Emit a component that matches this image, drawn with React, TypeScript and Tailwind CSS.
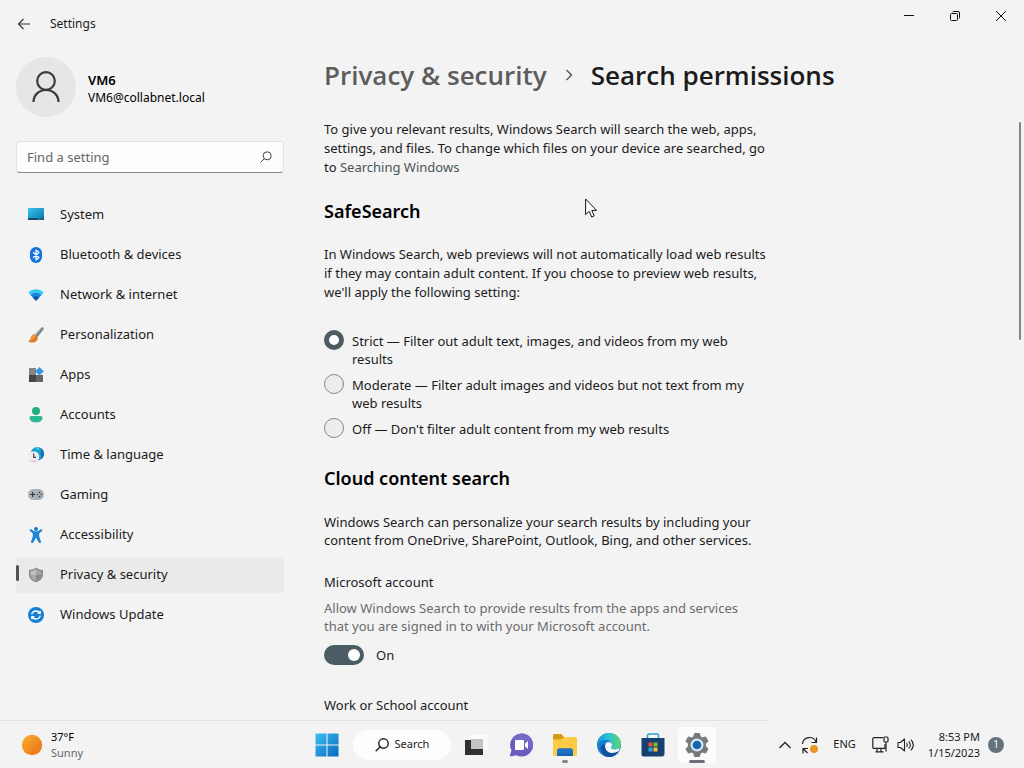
import React, { useState } from 'react';

interface NavItem {
  label: string;
  icon: React.ReactNode;
}

const navItems: NavItem[] = [
  {
    label: 'System',
    icon: (
      <svg viewBox="0 0 16 16" className="size-4">
        <defs>
          <linearGradient id="sys" x1="0" y1="0" x2="1" y2="1">
            <stop offset="0" stopColor="#38c8e8" />
            <stop offset="1" stopColor="#0872ae" />
          </linearGradient>
        </defs>
        <rect y="1" width="16" height="12" rx="1" fill="url(#sys)" />
        <path d="M0 11h16v1a1 1 0 0 1-1 1H1a1 1 0 0 1-1-1z" fill="#0c4a70" />
        <path d="M9.500 12h5" stroke="#8fd0e8" strokeWidth=".8" strokeDasharray="1 .8" />
      </svg>
    ),
  },
  {
    label: 'Bluetooth & devices',
    icon: (
      <svg viewBox="0 0 16 16" className="size-4">
        <rect x="2" width="12" height="16" rx="6" fill="#0f72e0" />
        <path d="M5 5.300 11 10.500 8 13V3l3 2.500L5 10.700" fill="none" stroke="#fff" strokeWidth="1.200" strokeLinejoin="round" />
      </svg>
    ),
  },
  {
    label: 'Network & internet',
    icon: (
      <svg viewBox="0 0 16 16" className="size-4">
        <path d="M.3 5.500C4.500 1.300 11.500 1.300 15.700 5.500L8.600 13.200a.8.8 0 0 1-1.200 0z" fill="#3ccbf0" />
        <path d="M2.600 8C5.600 5 10.400 5 13.400 8L8.600 13.200a.8.8 0 0 1-1.200 0z" fill="#1b86dc" />
        <path d="M4.800 10.400C6.600 8.700 9.400 8.700 11.200 10.400L8.600 13.200a.8.8 0 0 1-1.200 0z" fill="#1452b0" />
      </svg>
    ),
  },
  {
    label: 'Personalization',
    icon: (
      <svg viewBox="0 0 16 16" className="size-4">
        <path d="M14.500.3c1 .2 1.500 1 1 2L9.700 10 6.800 7.600 13.300.8z" fill="#76838a" />
        <path d="M13.300.8 6.800 7.600l1.200 1L14.500.3z" fill="#a5b0b6" />
        <path d="M6.800 7.600 9.700 10c.5 3-2 5.600-5.200 5.600-1.800 0-3.400-.5-4.300-1.500 2.500-.8 2-3 3.200-4.900.8-1.200 2-1.800 3.400-1.600z" fill="#e07a24" />
        <path d="M6.800 7.600c-1.400-.2-2.600.4-3.400 1.600-1.200 1.900-.7 4.100-3.200 4.900C4 14 6 11 8 8.600z" fill="#ee9a45" />
      </svg>
    ),
  },
  {
    label: 'Apps',
    icon: (
      <svg viewBox="0 0 16 16" className="size-4">
        <path d="M1 1h7v7H1z" fill="#858585" />
        <path d="M1 8h7v7H1z" fill="#454545" />
        <path d="M8 8h7v7H8z" fill="#666" />
        <path d="m11.500 0 4.300 4.300-4.300 4.300-4.300-4.300z" fill="#2f9be5" />
      </svg>
    ),
  },
  {
    label: 'Accounts',
    icon: (
      <svg viewBox="0 0 16 16" className="size-4">
        <circle cx="8" cy="4" r="4" fill="#1fae7c" />
        <path d="M3.200 9h9.600c1 0 1.700.8 1.700 1.800 0 3-2.700 4.700-6.500 4.700s-6.500-1.700-6.500-4.700C1.500 9.800 2.200 9 3.200 9z" fill="#2cb890" />
      </svg>
    ),
  },
  {
    label: 'Time & language',
    icon: (
      <svg viewBox="0 0 16 16" className="size-4">
        <circle cx="9.300" cy="6.700" r="6.700" fill="#1d9fd0" />
        <path d="M7 .5c2-.6 3.500-.4 4.500.4-1 .8-1.500 2.200-.5 3.400z" fill="#45cbd8" />
        <path d="M13 1.200c2 1.200 3 3.300 3 5.500 0 2-1 4-2.600 5.300-.4-3-1.400-6-.4-10.800z" fill="#1470b8" />
        <circle cx="5.700" cy="9.800" r="5.600" fill="#f1edf2" />
        <path d="M1 12.700c2 1.200 7 1.200 9.400 0-2 3.600-7.400 3.700-9.400 0z" fill="#edc6d6" />
        <path d="M5.700 6.500v3.900H8" fill="none" stroke="#3b4450" strokeWidth="1.200" />
      </svg>
    ),
  },
  {
    label: 'Gaming',
    icon: (
      <svg viewBox="0 0 16 16" className="size-4">
        <rect y="2" width="16" height="11" rx="5.500" fill="#a8b2b8" />
        <path d="M2.300 7.500h4.800M4.700 5.100v4.800" stroke="#30383d" strokeWidth="1.200" />
        <g fill="#3c464c">
          <circle cx="9.400" cy="7.500" r=".8" />
          <circle cx="11.500" cy="5.300" r=".9" />
          <circle cx="13.300" cy="7.500" r=".8" />
          <circle cx="11.500" cy="9.700" r=".9" />
        </g>
      </svg>
    ),
  },
  {
    label: 'Accessibility',
    icon: (
      <svg viewBox="0 0 16 16" className="size-4">
        <circle cx="8" cy="2" r="2" fill="#1778cc" />
        <path
          d="M2 2.600c.5-.6 1.200-.6 1.700-.1C5 3.800 6 4.500 8 4.500s3-.7 4.300-2c.5-.5 1.200-.5 1.700.1.400.5.300 1.100-.2 1.600L11.200 6.600v2.900l1.700 5c.2.700-.1 1.300-.7 1.500-.7.200-1.200-.1-1.500-.7L8 10.800l-2.700 4.500c-.3.600-.8.900-1.500.7-.6-.2-.9-.8-.7-1.500l1.700-5V6.600L2.200 4.200c-.5-.5-.6-1.100-.2-1.600z"
          fill="#1f84d6"
        />
      </svg>
    ),
  },
  {
    label: 'Privacy & security',
    icon: (
      <svg viewBox="0 0 16 16" className="size-4">
        <path d="M8 .5c1.900 1.500 4.200 2.300 7 2.400v4.700c0 3.600-2.700 6.500-7 7.700C3.700 14.100 1 11.200 1 7.600V2.900C3.800 2.800 6.100 2 8 .5z" fill="#8a8b8d" />
        <path d="M8 2v6H2.500V4.200C4.700 4 6.500 3.200 8 2z" fill="#bebfc1" />
        <path d="M8 2v6h5.500V4.200C11.300 4 9.500 3.200 8 2z" fill="#a2a3a5" />
        <path d="M2.500 8H8v6c-3.200-1.100-5.300-3.300-5.500-6z" fill="#a9aaac" />
      </svg>
    ),
  },
  {
    label: 'Windows Update',
    icon: (
      <svg viewBox="0 0 16 16" className="size-4">
        <circle cx="8" cy="8" r="8" fill="#1580d2" />
        <path
          d="M3.700 7.300C4.200 5.200 6 4 8 4c1.700 0 3 .8 3.900 2M12.200 3.700v2.600H9.600M12.300 8.700C11.800 10.800 10 12 8 12c-1.700 0-3-.8-3.900-2M3.800 12.300V9.700h2.600"
          fill="none"
          stroke="#fff"
          strokeWidth="1.300"
        />
      </svg>
    ),
  },
];

const safeSearchOptions = [
  { value: 'strict', label: 'Strict — Filter out adult text, images, and videos from my web results' },
  { value: 'moderate', label: 'Moderate — Filter adult images and videos but not text from my web results' },
  { value: 'off', label: "Off — Don't filter adult content from my web results" },
];

const TitleBar = () => (
  <header className="flex h-12 shrink-0 items-start justify-between">
    <div className="flex h-12 items-center gap-4 pl-4">
      <button type="button" aria-label="Back" className="flex size-4 items-center justify-center">
        <svg viewBox="0 0 16 16" className="size-4" fill="none" stroke="#333" strokeWidth="1.100">
          <path d="M14 8H2.500M7.500 3 2.500 8l5 5" />
        </svg>
      </button>
      <span className="pl-0.5 text-xs">Settings</span>
    </div>
    <div className="flex h-8">
      <button type="button" aria-label="Minimize" className="flex w-[46px] items-center justify-center">
        <svg viewBox="0 0 10 10" className="size-2.5" stroke="#111">
          <path d="M0 4.500h10" />
        </svg>
      </button>
      <button type="button" aria-label="Restore" className="flex w-[46px] items-center justify-center">
        <svg viewBox="0 0 10 10" className="size-2.5" fill="none" stroke="#111">
          <rect x=".5" y="2.500" width="7" height="7" rx="1" />
          <path d="M2.500 1A1.500 1.500 0 0 1 3.500.5H8A1.500 1.500 0 0 1 9.500 2v4.500c0 .5-.2.800-.5 1" />
        </svg>
      </button>
      <button type="button" aria-label="Close" className="flex w-[46px] items-center justify-center">
        <svg viewBox="0 0 10 10" className="size-2.5" stroke="#111">
          <path d="m0 0 10 10M10 0 0 10" />
        </svg>
      </button>
    </div>
  </header>
);

const Sidebar = () => (
  <aside className="w-[300px] shrink-0 px-4 pt-[9px]">
    <div className="flex items-center gap-3">
      <div className="flex size-[60px] items-center justify-center rounded-full bg-[#e6e6e6]">
        <svg viewBox="0 0 30 32" className="h-8 w-[30px]" fill="none" stroke="#3a3a3a" strokeWidth="2.200">
          <circle cx="15" cy="10" r="8.800" />
          <path d="M2.500 31c0-7 5.500-12 12.500-12s12.500 5 12.500 12" />
        </svg>
      </div>
      <div className="pt-1">
        <p className="text-[13px] leading-[18px] font-semibold text-black">VM6</p>
        <p className="text-xs leading-[18px] text-black">VM6@collabnet.local</p>
      </div>
    </div>

    <form className="relative mt-6" onSubmit={(e) => e.preventDefault()}>
      <input
        type="text"
        aria-label="Find a setting"
        placeholder="Find a setting"
        className="block h-8 w-[268px] rounded border border-[#e2e2e2] border-b-[#868686] bg-[#fdfdfd] pr-9 pl-2.5 text-[13px] outline-none placeholder:text-[#666]"
      />
      <svg viewBox="0 0 12 12" className="absolute top-2.5 right-3 size-3" fill="none" stroke="#444">
        <circle cx="7.200" cy="4.800" r="4" />
        <path d="M4.400 7.600.6 11.400" />
      </svg>
    </form>

    <nav className="mt-6 flex flex-col gap-1">
      {navItems.map((item) => {
        const active = item.label === 'Privacy & security';
        return (
          <a
            key={item.label}
            href="#"
            aria-current={active ? 'page' : undefined}
            className={`relative flex h-9 items-center gap-4 rounded pl-3 text-[13px] ${active ? 'bg-[#eaeaea]' : ''}`}
          >
            {active && <span className="absolute top-2 left-0 h-4 w-[3px] rounded-full bg-[#4a5459]" />}
            {item.icon}
            {item.label}
          </a>
        );
      })}
    </nav>
  </aside>
);

const SearchPermissions = () => {
  const [safeSearch, setSafeSearch] = useState('strict');
  const [account, setAccount] = useState(true);

  return (
    <main className="flex min-w-0 flex-1 flex-col pl-6">
      <h1 className="flex items-center pt-[9px] font-['Open_Sans',sans-serif] text-[26px] leading-9 font-semibold whitespace-nowrap">
        <a href="#" className="text-[#5d5d5d]">Privacy &amp; security</a>
        <svg viewBox="0 0 10 12" className="mx-[17px] h-3 w-2.5" fill="none" stroke="#5d5d5d" strokeWidth="1.500">
          <path d="m2.500 1 5 5-5 5" />
        </svg>
        <span>Search permissions</span>
      </h1>

      <div className="mt-[27px] flex min-h-0 flex-1 justify-between overflow-hidden">
        <div className="w-[448px] text-[13px] leading-[18px]">
          <p className="leading-[19px]">
            To give you relevant results, Windows Search will search the web, apps, settings, and files. To change which
            files on your device are searched, go to{' '}
            <a href="#" className="text-[#4a5459]">Searching Windows</a>
          </p>

          <h2 id="safesearch-title" className="mt-5 text-lg leading-7 font-semibold text-black">SafeSearch</h2>
          <p className="mt-5 leading-[19px]">
            In Windows Search, web previews will not automatically load web results if they may contain adult content. If
            you choose to preview web results, we'll apply the following setting:
          </p>
          <div role="radiogroup" aria-labelledby="safesearch-title" className="mt-7 flex flex-col gap-1.5">
            {safeSearchOptions.map((option) => (
              <label key={option.value} className="flex items-start gap-2">
                <input
                  type="radio"
                  name="safesearch"
                  value={option.value}
                  checked={safeSearch === option.value}
                  onChange={() => setSafeSearch(option.value)}
                  className="size-5 shrink-0 appearance-none rounded-full border border-[#868686] bg-[#ededed] checked:border-5 checked:border-[#4f5b61] checked:bg-white"
                />
                <span className="pt-0.5">{option.label}</span>
              </label>
            ))}
          </div>

          <h2 className="mt-[26px] text-lg leading-7 font-semibold text-black">Cloud content search</h2>
          <p className="mt-[21px]">
            Windows Search can personalize your search results by including your content from OneDrive, SharePoint,
            Outlook, Bing, and other services.
          </p>

          <h3 className="mt-6">Microsoft account</h3>
          <p className="mt-2 pr-4 text-[#6b6b6b]">
            Allow Windows Search to provide results from the apps and services that you are signed in to with your
            Microsoft account.
          </p>
          <label className="mt-2.5 flex items-center gap-3">
            <input
              type="checkbox"
              role="switch"
              aria-label="Microsoft account"
              checked={account}
              onChange={(e) => setAccount(e.target.checked)}
              className="flex h-5 w-10 appearance-none items-center rounded-full bg-[#8a8a8a] px-1 before:size-3 before:rounded-full before:bg-white checked:justify-end checked:bg-[#4c5c65]"
            />
            <span>{account ? 'On' : 'Off'}</span>
          </label>

          <h3 className="mt-[31px]">Work or School account</h3>
        </div>
        <div className="mt-0.5 mr-[3px] h-[218px] w-0.5 rounded-full bg-[#858585]" />
      </div>
    </main>
  );
};

const taskbarApps = [
  {
    name: 'Task View',
    icon: (
      <svg viewBox="0 0 24 24" className="size-6">
        <path d="M6 2h17v15H6z" fill="#fafafa" />
        <path d="M0 7h18v15H0z" fill="#303030" />
        <path d="M6 6h12v10H6z" fill="#c4c4c4" />
      </svg>
    ),
  },
  {
    name: 'Chat',
    icon: (
      <svg viewBox="0 0 24 24" className="size-6">
        <path d="M12.500.5a11.500 11.500 0 1 1-5 21.800L1 23.500.9 22.300 2.500 17.500A11.500 11.500 0 0 1 12.500.5z" fill="#6a5dbe" />
        <path d="M12.500.5A11.500 11.500 0 0 1 24 12c0 2-.5 3.500-1.200 5C18 8 10 7 3 7.200A11.500 11.500 0 0 1 12.500.5z" fill="#7469c8" />
        <rect x="6" y="7" width="9" height="10" rx="1" fill="#fff" />
        <path d="m16 10.500 3-2.500v8l-3-2.500z" fill="#fff" />
      </svg>
    ),
  },
  {
    name: 'File Explorer',
    running: true,
    icon: (
      <svg viewBox="0 0 24 24" className="size-6">
        <path d="M0 2.500C0 1.700.5 1 1.300 1h7L11 4v4H0z" fill="#d79a14" />
        <path d="M0 6.500h8.500L11 4h11.500c.8 0 1.500.7 1.500 1.500v16c0 .8-.7 1.500-1.500 1.500h-21C.7 23 0 22.300 0 21.500z" fill="#fbcb45" />
        <path d="M4 22v-4c0-1.700 1-2.700 2.500-2.700h11c1.500 0 2.500 1 2.500 2.700v4z" fill="#1c70c6" />
        <path d="M4 23v-2.500h16V23z" fill="#1a62b0" />
      </svg>
    ),
  },
  {
    name: 'Edge',
    icon: (
      <svg viewBox="0 0 24 24" className="size-6">
        <defs>
          <linearGradient id="edgeTop" x1="0" y1=".5" x2="1" y2=".5">
            <stop offset="0" stopColor="#1597dc" />
            <stop offset=".5" stopColor="#2bc4cf" />
            <stop offset="1" stopColor="#60d56c" />
          </linearGradient>
        </defs>
        <circle cx="12" cy="12" r="12" fill="#147fd0" />
        <path d="M0 11.500C.8 4.500 5.800 0 12 0c7 0 12 5 12 10.500 0 3.800-2.700 6-6 6-2.500 0-4-1-4-2 0-.8 1-1.200 1-3C15 9 12 7 8.500 7 4.500 7 1.500 9 0 11.500z" fill="url(#edgeTop)" />
        <path d="M8 13c0-2.500 1.700-4 3.500-4 2 0 3.500 1.200 3.500 2.700 0 1.500-1 2-1 2.800 0 1 1.500 2 4 2 1.500 0 3-.5 4-1.200.5-.4 1 .1.700.7-1 2-2.500 4-4.700 5.500C12.500 22.500 8 18 8 13z" fill="#f4f8fb" />
        <path d="M8.300 11C7 15.500 10 20 15 20c2.500 0 4.500-.8 6-1.500.4-.2.700.2.500.5A12 12 0 0 1 12 24c-5-.5-8.500-4.500-8.500-8.500 0-2.500 2-4 4.800-4.500z" fill="#124f9e" />
      </svg>
    ),
  },
  {
    name: 'Microsoft Store',
    icon: (
      <svg viewBox="0 0 24 24" className="size-6">
        <path d="M6.500 6V2.500C6.500 1.700 7.100 1 8 1h8c.9 0 1.500.7 1.500 1.500V6" fill="none" stroke="#2ba0d8" strokeWidth="1.500" />
        <path d="M.5 5h23v16c0 1.300-1 2.500-2.500 2.500H3A2.400 2.400 0 0 1 .5 21z" fill="#16406f" />
        <path d="M7.500 9.500h4v4h-4z" fill="#e8532b" />
        <path d="M12.500 9.500h4v4h-4z" fill="#7fba2d" />
        <path d="M7.500 14.500h4v4h-4z" fill="#2ba4e4" />
        <path d="M12.500 14.500h4v4h-4z" fill="#fcb92a" />
      </svg>
    ),
  },
  {
    name: 'Settings',
    active: true,
    icon: (
      <svg viewBox="0 0 24 24" className="size-6">
        <path
          d="m9.500.5 5 0 .7 3.200 2.200 1.200 3.200-1 2.500 4.300-2.500 2.400v2.800l2.500 2.400-2.500 4.300-3.200-1-2.200 1.200-.7 3.200h-5l-.7-3.200-2.200-1.200-3.200 1-2.500-4.300 2.500-2.400v-2.800L.9 8.200l2.500-4.300 3.200 1 2.200-1.200z"
          fill="#74797d"
          stroke="#74797d"
          strokeLinejoin="round"
        />
        <circle cx="12" cy="12" r="6.500" fill="#d7e9f5" />
        <circle cx="12" cy="12" r="4.300" fill="#1667b2" />
      </svg>
    ),
  },
];

const Taskbar = () => (
  <footer className="shrink-0">
    <div className="h-px w-3/4 bg-[#e2e2e2]" />
    <div className="grid h-[47px] grid-cols-[1fr_auto_1fr] items-center">
      <button type="button" className="flex items-center gap-2 justify-self-start pl-[21px] text-left">
        <svg viewBox="0 0 22 22" className="size-[22px]">
          <defs>
            <linearGradient id="sun" x1="0" y1="0" x2="1" y2="1">
              <stop offset="0" stopColor="#f5b32f" />
              <stop offset="1" stopColor="#ee6a16" />
            </linearGradient>
          </defs>
          <circle cx="11" cy="11" r="10.200" fill="url(#sun)" />
        </svg>
        <span className="flex flex-col text-[11px] leading-4 text-black">
          <span>37°F</span>
          <span className="text-[#666]">Sunny</span>
        </span>
      </button>

      <div className="flex items-center">
        <button type="button" aria-label="Start" className="flex h-10 w-11 items-center justify-center">
          <svg viewBox="0 0 24 24" className="size-6">
            <defs>
              <linearGradient id="start" x1="0" y1="0" x2="24" y2="24" gradientUnits="userSpaceOnUse">
                <stop offset="0" stopColor="#3fc0f4" />
                <stop offset="1" stopColor="#0467bd" />
              </linearGradient>
            </defs>
            <path d="M.5.5h11v11H.5zM12.500.5h11v11h-11zM.5 12.500h11v11H.5zM12.500 12.500h11v11h-11z" fill="url(#start)" />
          </svg>
        </button>
        <button type="button" className="mx-1 flex h-[30px] w-[98px] items-center justify-center gap-1.5 rounded-full bg-[#fdfdfd] text-[11px]">
          <svg viewBox="0 0 14 14" className="size-3.5" fill="none" stroke="#222" strokeWidth="1.400">
            <circle cx="8.500" cy="5.500" r="4.700" />
            <path d="M5.200 8.800.7 13.300" />
          </svg>
          Search
        </button>
        {taskbarApps.map((app) => (
          <button key={app.name} type="button" aria-label={app.name} className="relative flex h-10 w-11 items-center justify-center">
            <span className={`flex h-9 w-[38px] items-center justify-center rounded ${app.active ? 'bg-[#fcfcfc]' : ''}`}>
              {app.icon}
            </span>
            {app.active && <span className="absolute bottom-0.5 h-[3px] w-4 rounded-full bg-[#6a6e76]" />}
            {app.running && <span className="absolute bottom-0.5 h-[3px] w-1.5 rounded-full bg-[#85858c]" />}
          </button>
        ))}
      </div>

      <div className="flex items-center justify-self-end pr-5">
        <button type="button" aria-label="Show hidden icons" className="mr-2.5">
          <svg viewBox="0 0 12 8" className="h-2 w-3" fill="none" stroke="#222" strokeWidth="1.300">
            <path d="m.5 7 5.500-5.500L11.500 7" />
          </svg>
        </button>
        <button type="button" aria-label="Updates available" className="mr-3.5">
          <svg viewBox="0 0 18 18" className="size-[18px]" fill="none" stroke="#222" strokeWidth="1.200">
            <path d="M1.500 8a7 7 0 0 1 13.500-2M15.500 1.500v5h-5M7 12.500H2v5M2.500 13l4 4" />
            <circle cx="13" cy="13" r="4" fill="#eb9620" stroke="none" />
          </svg>
        </button>
        <button type="button" className="mr-4 text-[11px]">ENG</button>
        <button type="button" aria-label="Network and volume" className="mr-3.5 flex items-center gap-2">
          <svg viewBox="0 0 17 17" className="size-[17px]" fill="none" stroke="#222" strokeWidth="1.200">
            <path d="M11 1.600H2A1.200 1.200 0 0 0 .8 2.800v8.400A1.200 1.200 0 0 0 2 12.400h11V8M5 12.500v3M9 12.500v3M3.500 15.800h8" />
            <rect x="12" y="1" width="4" height="5" rx="1" />
            <path d="M14 6v9.500" />
          </svg>
          <svg viewBox="0 0 17 14" className="h-3.5 w-[17px]" fill="none" stroke="#222" strokeWidth="1.100">
            <path d="M1 4.500v5h2.500L7.500 13V1L3.500 4.500z" strokeLinejoin="round" />
            <path d="M9.500 5c1 1.200 1 2.800 0 4M11.700 3.300c2 2.200 2 5.200 0 7.400M14 1.700c2.800 3.200 2.800 7.400 0 10.600" />
          </svg>
        </button>
        <button type="button" className="mr-2 flex flex-col items-end text-[11px] leading-4">
          <span>8:53 PM</span>
          <span>1/15/2023</span>
        </button>
        <button type="button" className="flex size-4 items-center justify-center rounded-full bg-[#64737b] text-[10px] text-white">
          1
        </button>
      </div>
    </div>
  </footer>
);

export default function App() {
  return (
    <div className="relative flex h-screen flex-col overflow-hidden bg-[#f3f3f3] font-['Noto_Sans',sans-serif] text-[#1b1b1b]">
      <TitleBar />
      <div className="flex min-h-0 flex-1">
        <Sidebar />
        <SearchPermissions />
      </div>
      <Taskbar />
      {/* mouse pointer */}
      <svg viewBox="0 0 12 20" className="pointer-events-none absolute top-[198px] left-[585px] h-5 w-3">
        <path d="M.6 1v15.600l3.600-3.300 2.500 5.700 2.500-1.100-2.400-5.500h4.800z" fill="#fff" stroke="#111" strokeLinejoin="round" />
      </svg>
    </div>
  );
}
